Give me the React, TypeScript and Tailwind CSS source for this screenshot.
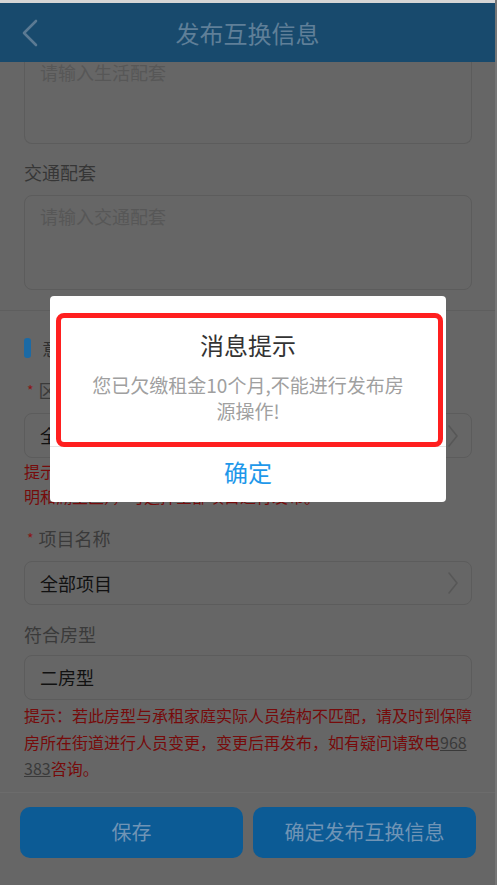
import React from "react";

const FONT = { fontFamily: '"Noto Sans CJK SC", "Noto Sans", "Liberation Sans", sans-serif' };

function Chevron() {
  return (
    <svg width="12" height="24" viewBox="0 0 12 24" fill="none">
      <polyline points="2,2 10,12 2,22" stroke="#575757" strokeWidth="1.6" strokeLinecap="round" strokeLinejoin="round" />
    </svg>
  );
}

export default function App() {
  return (
    <div className="w-[497px] h-[885px] overflow-hidden relative flex bg-[#666666]" style={FONT}>
      <div className="flex-1 flex flex-col">
        <div className="h-[3px] bg-[#d6d6d6]" />
        {/* header */}
        <div className="h-[59px] bg-[#184a6d] grid grid-cols-[1fr_auto_1fr] items-center">
          <div className="pl-[21px] flex items-center">
            <svg width="18" height="28" viewBox="0 0 18 28" fill="none">
              <polyline points="15,2 3,14 15,26" stroke="#5b7a93" strokeWidth="2.6" strokeLinecap="round" strokeLinejoin="round" />
            </svg>
          </div>
          <div className="text-[24px] leading-[30px] text-[#5f7f98]">发布互换信息</div>
          <div />
        </div>

        {/* section 1 */}
        <div className="pl-[24px] pr-[23px] flex flex-col">
          <div className="h-[82px] border-x border-b border-[#5c5c5c] rounded-b-[8px] px-[15px] text-[18px] leading-[20px] text-[#575757]">
            请输入生活配套
          </div>
          <div className="mt-[16px] text-[18px] leading-[24px] text-[#363636]">交通配套</div>
          <div className="mt-[11px] h-[95px] border border-[#5c5c5c] rounded-[8px] px-[15px] pt-[8px] text-[18px] leading-[24px] text-[#575757]">
            请输入交通配套
          </div>
        </div>
        <div className="mt-[20px] h-px bg-[#5e5e5e]" />

        {/* section 2 */}
        <div className="pl-[24px] pr-[23px] flex flex-col">
          <div className="mt-[27px] h-[20px] flex items-center gap-[11px]">
            <div className="w-[7px] h-[20px] rounded-[3px] bg-[#1b6aa5]" />
            <div className="text-[18px] leading-[24px] text-[#2f2f2f]">意向房源信息</div>
          </div>
          <div className="mt-[20px] text-[18px] leading-[24px] text-[#3a3a3a] flex items-center">
            <span className="text-[#8a1616] text-[14px] pl-[3px] pr-[5px]">*</span>区域
          </div>
          <div className="mt-[11px] h-[45px] border border-[#5c5c5c] rounded-[8px] pl-[15px] pr-[12px] flex items-center justify-between">
            <span className="text-[18px] text-[#111111]">全部区域</span>
            <Chevron />
          </div>
          <div className="mt-[1px] text-[16px] leading-[25px] text-[#760b0b]">
            提示：区域选择后，项目名称将显示该区域内的项目（思
            <br />
            明和湖里区），可选择全部项目进行发布。
          </div>
          <div className="mt-[17px] text-[18px] leading-[24px] text-[#3a3a3a] flex items-center">
            <span className="text-[#8a1616] text-[14px] pl-[3px] pr-[5px]">*</span>项目名称
          </div>
          <div className="mt-[11px] h-[44px] border border-[#5c5c5c] rounded-[8px] pl-[15px] pr-[12px] flex items-center justify-between">
            <span className="text-[18px] text-[#111111]">全部项目</span>
            <Chevron />
          </div>
          <div className="mt-[17px] text-[18px] leading-[24px] text-[#3a3a3a]">符合房型</div>
          <div className="mt-[9px] h-[45px] border border-[#5c5c5c] rounded-[8px] pl-[15px] flex items-center">
            <span className="text-[18px] text-[#111111]">二房型</span>
          </div>
          <div className="mt-[2px] text-[16px] leading-[26.5px] text-[#760b0b] whitespace-nowrap">
            提示：若此房型与承租家庭实际人员结构不匹配，请及时到保障
            <br />
            房所在街道进行人员变更，变更后再发布，如有疑问请致电
            <span className="text-[#3a3a3a] underline">968</span>
            <br />
            <span className="text-[#3a3a3a] underline">383</span>咨询。
          </div>
        </div>
        <div className="mt-[10px] h-px bg-[#6c6c6c]" />
        <div className="mt-[14px] pl-[20px] pr-[19px] flex gap-[10px]">
          <div className="flex-1 h-[51px] rounded-[10px] bg-[#0c5b95] flex items-center justify-center text-[20px] text-[#7094b5]">
            保存
          </div>
          <div className="flex-1 h-[51px] rounded-[10px] bg-[#0c5b95] flex items-center justify-center text-[20px] text-[#7094b5]">
            确定发布互换信息
          </div>
        </div>
      </div>
      <div className="w-[3px] bg-[#757575]" />

      {/* overlay + dialog */}
      <div className="absolute inset-0 flex justify-center pt-[296px]">
        <div className="relative w-[396px] h-[206px] bg-white rounded-[4px] flex flex-col items-center pt-[34px] ml-[-1px]">
          <div className="text-[24px] leading-[30px] text-[#333333]">消息提示</div>
          <div className="mt-[12px] text-[19px] leading-[26px] text-[#a0a0a0] text-center whitespace-nowrap">
            您已欠缴租金10个月,不能进行发布房
            <br />
            源操作!
          </div>
          <div className="mt-[22px] w-full border-t border-[#e5e5e5] h-[50px] flex items-center justify-center text-[24px] leading-[30px] text-[#1e98ea]">
            确定
          </div>
          <div className="absolute left-[6px] top-[17px] w-[387px] h-[134px] border-[5px] border-[#ff1f1f] rounded-[8px]" />
        </div>
      </div>
    </div>
  );
}
